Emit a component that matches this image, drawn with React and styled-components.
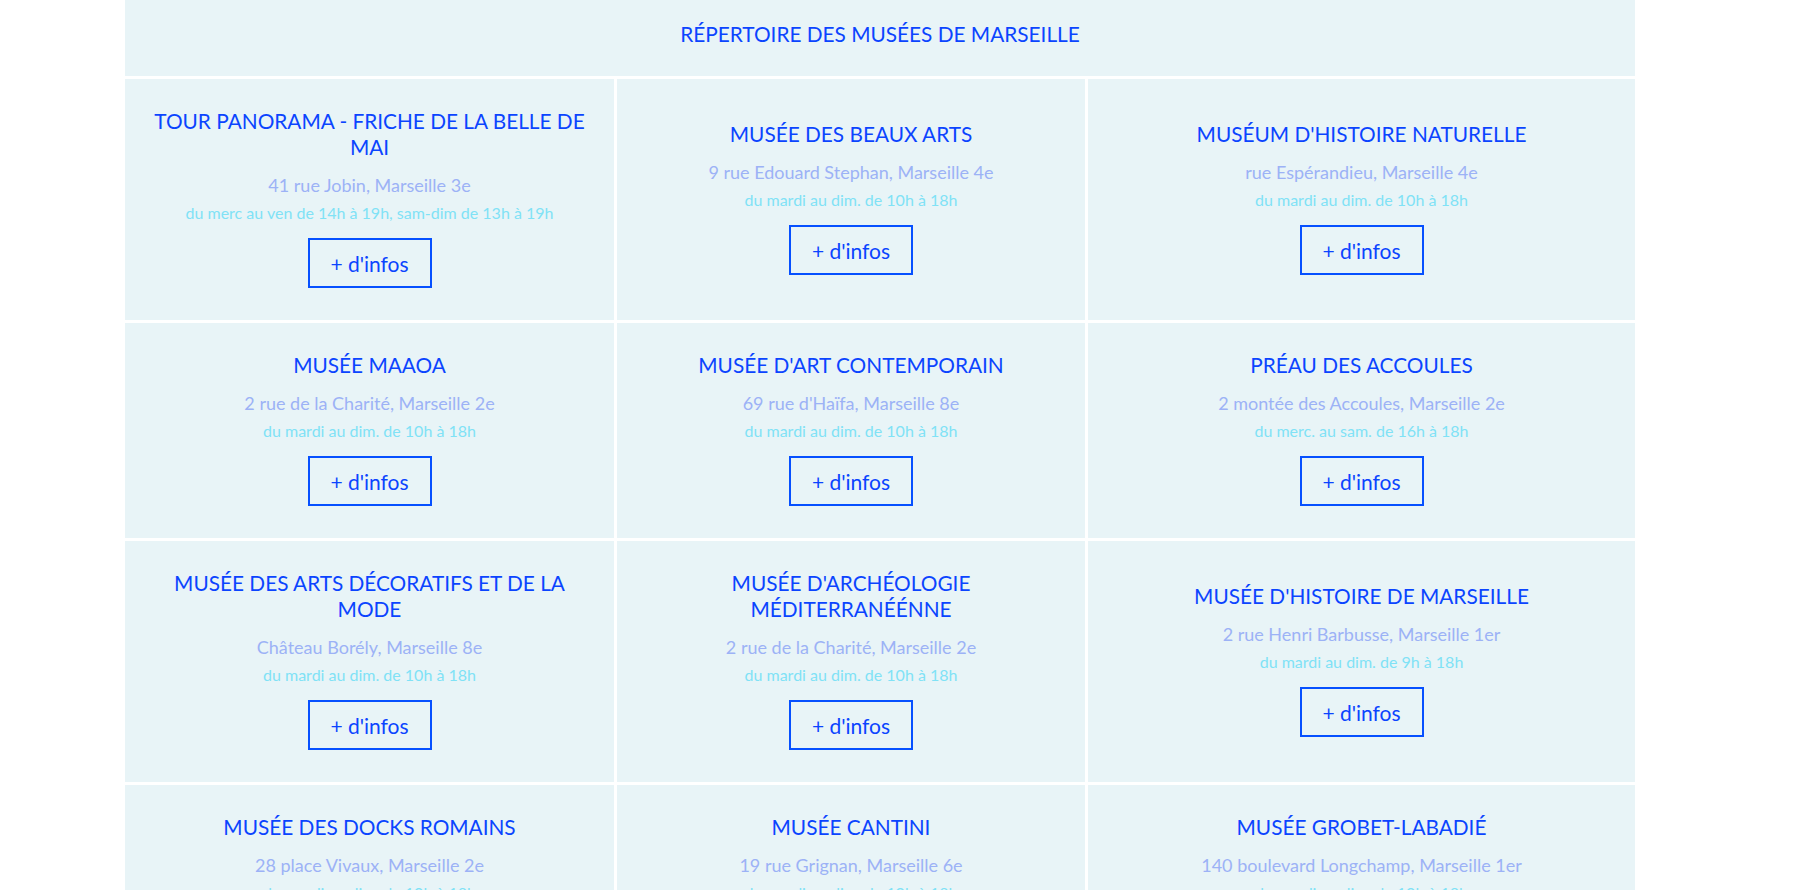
import React from 'react';
import styled, { createGlobalStyle } from 'styled-components';

const GlobalStyle = createGlobalStyle`
  body {
    margin: 0;
    background: #fff;
    font-family: Lato, "Open Sans", sans-serif;
  }
`;

const museums = [
  { name: 'Tour Panorama - Friche de la Belle de Mai', address: '41 rue Jobin, Marseille 3e', hours: 'du merc au ven de 14h à 19h, sam-dim de 13h à 19h' },
  { name: 'Musée des Beaux Arts', address: '9 rue Edouard Stephan, Marseille 4e', hours: 'du mardi au dim. de 10h à 18h' },
  { name: "Muséum d'Histoire Naturelle", address: 'rue Espérandieu, Marseille 4e', hours: 'du mardi au dim. de 10h à 18h' },
  { name: 'Musée MAAOA', address: '2 rue de la Charité, Marseille 2e', hours: 'du mardi au dim. de 10h à 18h' },
  { name: "Musée d'Art Contemporain", address: "69 rue d'Haïfa, Marseille 8e", hours: 'du mardi au dim. de 10h à 18h' },
  { name: 'Préau des Accoules', address: '2 montée des Accoules, Marseille 2e', hours: 'du merc. au sam. de 16h à 18h' },
  { name: 'Musée des Arts Décoratifs et de la Mode', address: 'Château Borély, Marseille 8e', hours: 'du mardi au dim. de 10h à 18h' },
  { name: "Musée d'Archéologie Méditerranéénne", address: '2 rue de la Charité, Marseille 2e', hours: 'du mardi au dim. de 10h à 18h' },
  { name: "Musée d'Histoire de Marseille", address: '2 rue Henri Barbusse, Marseille 1er', hours: 'du mardi au dim. de 9h à 18h' },
  { name: 'Musée des Docks Romains', address: '28 place Vivaux, Marseille 2e', hours: 'du mardi au dim. de 10h à 18h' },
  { name: 'Musée Cantini', address: '19 rue Grignan, Marseille 6e', hours: 'du mardi au dim. de 10h à 18h' },
  { name: 'Musée Grobet-Labadié', address: '140 boulevard Longchamp, Marseille 1er', hours: 'du mardi au dim. de 10h à 18h' },
];

const Directory = styled.div`
  width: 1510px;
  margin-left: 125px;
  display: grid;
  grid-template-columns: 489px 468px 547px;
  gap: 3px;
`;

const Header = styled.h1`
  grid-column: 1 / -1;
  margin: 0;
  padding: 21px 0 29px;
  background: #e8f4f7;
  color: #0b44ff;
  font-size: 20.8px;
  font-weight: 400;
  line-height: 26px;
  text-align: center;
  text-transform: uppercase;
`;

const Cell = styled.div`
  background: #e8f4f7;
  padding: 29px 24px 32px;
  display: flex;
  flex-direction: column;
  align-items: center;
  justify-content: center;
  text-align: center;
`;

const Name = styled.h2`
  margin: 0 0 12px;
  color: #0b44ff;
  font-size: 20.8px;
  font-weight: 400;
  line-height: 26px;
  text-transform: uppercase;
`;

const Address = styled.p`
  margin: 0;
  color: #9cb2f6;
  font-size: 18px;
  line-height: 27px;
`;

const Hours = styled.p`
  margin: 0 0 12px;
  color: #80e2f6;
  font-size: 16px;
  line-height: 27px;
`;

const InfoButton = styled.a`
  box-sizing: border-box;
  width: 124px;
  height: 50px;
  border: 2px solid #0650ff;
  color: #0b44ff;
  font-size: 21px;
  display: flex;
  align-items: center;
  justify-content: center;
  text-decoration: none;
  cursor: pointer;
`;

const App = () => (
  <>
    <GlobalStyle />
    <Directory>
      <Header>Répertoire des musées de Marseille</Header>
      {museums.map((m) => (
        <Cell key={m.name}>
          <Name>{m.name}</Name>
          <Address>{m.address}</Address>
          <Hours>{m.hours}</Hours>
          <InfoButton href="#">+ d'infos</InfoButton>
        </Cell>
      ))}
    </Directory>
  </>
);

export default App;
